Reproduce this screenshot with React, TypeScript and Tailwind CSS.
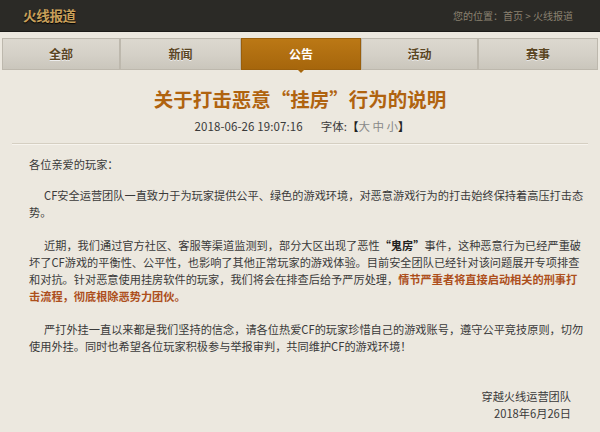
import React from 'react';

const tabs = [
  { label: '全部', w: 'w-[118px]' },
  { label: '新闻', w: 'w-[121px]' },
  { label: '公告', w: 'w-[120px]', active: true },
  { label: '活动', w: 'w-[117px]' },
  { label: '赛事', w: 'w-[120px]' },
];

export default function App() {
  return (
    <div className="w-[600px] h-[432px] overflow-hidden bg-[#ece8df] text-[#3a3a3a] font-['Noto_Sans_CJK_SC','Liberation_Sans',sans-serif]">
      {/* Top bar */}
      <div className="h-[32px] bg-[#2b2a26] flex items-center justify-between pl-[23px] pr-[27px] border-b border-[#1c1b18]">
        <span className="text-[13.5px] font-bold text-[#c9a05a] tracking-[-0.3px] [text-shadow:0_1px_1px_#000]">
          火线报道
        </span>
        <span className="text-[10px] text-[#8a8170]">
          您的位置：首页 &gt; 火线报道
        </span>
      </div>

      {/* Tabs */}
      <div className="mt-[6px] mx-[2px] flex h-[32px]">
        {tabs.map((t) =>
          t.active ? (
            <div
              key={t.label}
              className={`${t.w} relative flex items-center justify-center bg-linear-to-b from-[#bb7815] to-[#a6660c] border border-[#9a5f0c] text-white text-[12px] font-bold`}
            >
              {t.label}
              <span className="absolute left-1/2 -bottom-[4px] -translate-x-1/2 w-0 h-0 border-l-[4px] border-r-[4px] border-t-[4px] border-l-transparent border-r-transparent border-t-[#a6660c]" />
            </div>
          ) : (
            <div
              key={t.label}
              className={`${t.w} flex items-center justify-center bg-linear-to-b from-[#dcd8cf] via-[#d5d1c8] to-[#cac6bc] border border-[#bdb8ad] text-[#5a4522] text-[12px] font-bold [text-shadow:0_1px_0_#eee]`}
            >
              {t.label}
            </div>
          )
        )}
      </div>

      {/* Article head */}
      <h1 className="mt-[15px] text-center text-[19.5px] leading-[28px] font-bold text-[#b0630f]">
        关于打击恶意“挂房”行为的说明
      </h1>
      <div className="mt-[5px] flex justify-center items-center gap-[18px] text-[11.5px] leading-[17px] text-[#3a3a3a] pl-[4px]">
        <span className="tracking-[0.1px]">2018-06-26 19:07:16</span>
        <span>
          字体:
          <b className="text-[#222]">【</b>
          <span className="text-[#888]">大 中 小</span>
          <b className="text-[#222]">】</b>
        </span>
      </div>
      <div className="mt-[8px] mx-[12px] border-t border-[#d5cfc2] border-b-1 border-b-[#f7f4ee]" />

      {/* Body */}
      <div className="mt-[11px] pl-[29px] pr-[20px] text-[11.2px] leading-[17px] whitespace-nowrap">
        <p>各位亲爱的玩家：</p>
        <p className="mt-[14px] indent-[15px]">
          CF安全运营团队一直致力于为玩家提供公平、绿色的游戏环境，对恶意游戏行为的打击始终保持着高压打击态
          <br />
          势。
        </p>
        <p className="mt-[16px] indent-[15px]">
          近期，我们通过官方社区、客服等渠道监测到，部分大区出现了恶性
          <b className="text-[#222]">“鬼房”</b>
          事件，这种恶意行为已经严重破
          <br />
          坏了CF游戏的平衡性、公平性，也影响了其他正常玩家的游戏体验。目前安全团队已经针对该问题展开专项排查
          <br />
          和对抗。针对恶意使用挂房软件的玩家，我们将会在排查后给予严厉处理，
          <b className="text-[#ad4f1c]">
            情节严重者将直接启动相关的刑事打
            <br />
            击流程，彻底根除恶势力团伙。
          </b>
        </p>
        <p className="mt-[16px] indent-[15px]">
          严打外挂一直以来都是我们坚持的信念，请各位热爱CF的玩家珍惜自己的游戏账号，遵守公平竞技原则，切勿
          <br />
          使用外挂。同时也希望各位玩家积极参与举报审判，共同维护CF的游戏环境！
        </p>
        <div className="mt-[33px] pr-[9px] text-right">
          <p>穿越火线运营团队</p>
          <p>2018年6月26日</p>
        </div>
      </div>
    </div>
  );
}
